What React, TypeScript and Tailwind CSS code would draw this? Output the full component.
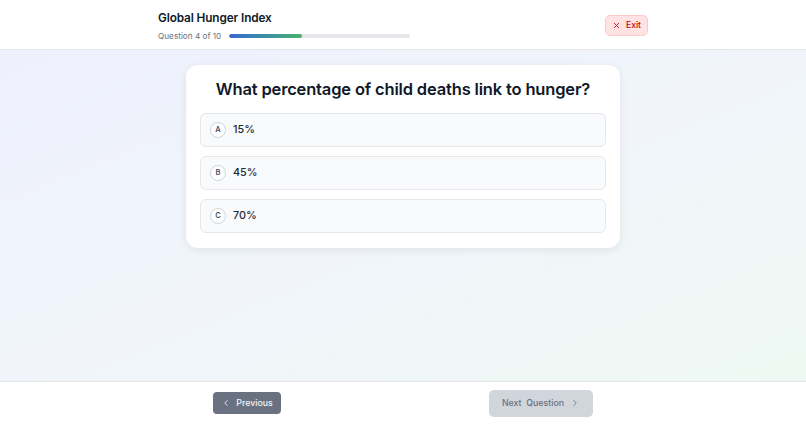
import { ChevronLeft, ChevronRight, X } from "lucide-react";

const options = [
  { letter: "A", text: "15%" },
  { letter: "B", text: "45%" },
  { letter: "C", text: "70%" },
];

export default function App() {
  const current = 4;
  const total = 10;

  return (
    <div className="flex h-[424px] flex-col font-['Inter',sans-serif] text-gray-900">
      {/* Header */}
      <header className="h-[50px] shrink-0 border-b border-gray-200 bg-white">
        <div className="mx-auto flex h-full w-[490px] items-center justify-between">
          <div className="flex flex-col pt-[3px]">
            <h1 className="text-[11.8px] font-semibold leading-4 tracking-[-0.01em] text-gray-900">Global Hunger Index</h1>
            <div className="mt-[4px] flex items-center gap-[8px]">
              <span className="text-[8.2px] leading-3 text-gray-500">
                Question {current} of {total}
              </span>
              <div className="h-[4px] w-[181px] overflow-hidden rounded-full bg-gray-200">
                <div
                  className="h-full rounded-full bg-gradient-to-r from-[#3b66d1] to-[#4cb068]"
                  style={{ width: `${(current / total) * 100}%` }}
                />
              </div>
            </div>
          </div>
          <button className="mt-[1px] flex h-[21px] w-[43px] items-center justify-center gap-[5px] rounded-[5px] border border-red-200 bg-red-100 text-[8.5px] font-medium text-red-700">
            <X className="h-[9px] w-[9px]" strokeWidth={2.2} />
            Exit
          </button>
        </div>
      </header>

      {/* Main */}
      <main className="flex-1 bg-gradient-to-br from-[#eef1fd] via-[#f1f5fb] to-[#eff9f3] pt-[15px]">
        <div className="mx-auto w-[434px] rounded-xl bg-white px-[14px] pb-[15px] pt-[12px] shadow-[0_2px_8px_rgba(0,0,0,0.08)]">
          <h2 className="text-center text-[16.5px] font-semibold leading-6 tracking-[-0.01em] text-gray-900">
            What percentage of child deaths link to hunger?
          </h2>
          <div className="mt-[12px] flex flex-col gap-[9px]">
            {options.map((o) => (
              <button
                key={o.letter}
                className="flex h-[34px] items-center gap-[7px] rounded-md border border-gray-200 bg-gray-50 pl-[9px] text-left"
              >
                <span className="flex h-[16px] w-[16px] items-center justify-center rounded-full border border-gray-300 bg-white text-[7.5px] font-semibold text-gray-600">
                  {o.letter}
                </span>
                <span className="text-[10.8px] font-medium text-gray-800">{o.text}</span>
              </button>
            ))}
          </div>
        </div>
      </main>

      {/* Footer */}
      <footer className="h-[43px] shrink-0 border-t border-gray-200 bg-white">
        <div className="mx-auto flex h-full w-[380px] items-center justify-between">
          <button className="flex h-[22px] w-[68px] items-center justify-center gap-[5px] rounded-[4px] bg-gray-500 text-[8.8px] font-medium text-gray-100">
            <ChevronLeft className="h-[10px] w-[10px]" strokeWidth={2} />
            Previous
          </button>
          <button className="flex h-[27px] w-[104px] items-center justify-center gap-[6px] rounded-[5px] bg-gray-300 text-[8.8px] font-medium text-gray-500">
            <span>Next&nbsp;&nbsp;Question</span>
            <ChevronRight className="h-[10px] w-[10px]" strokeWidth={2} />
          </button>
        </div>
      </footer>
    </div>
  );
}
